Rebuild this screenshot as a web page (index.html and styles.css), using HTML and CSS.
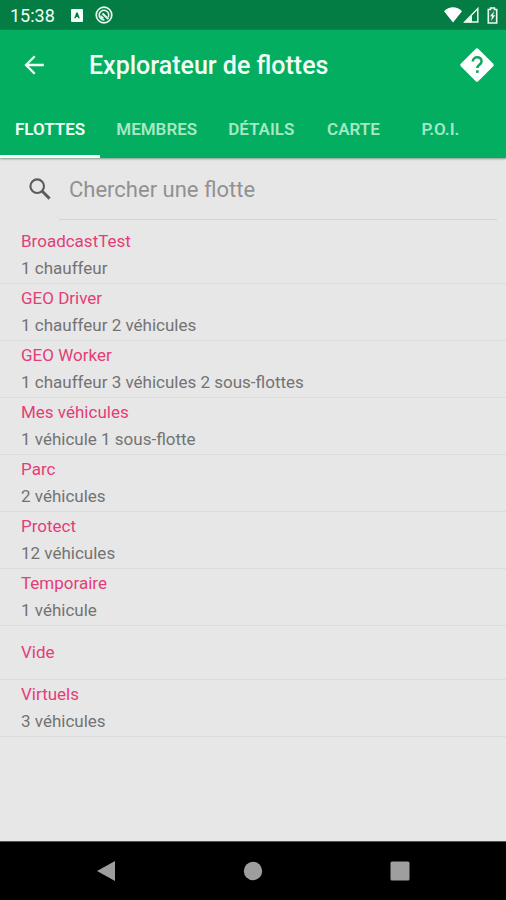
FILE: index.html
```html
<!DOCTYPE html>
<html lang="fr">
<head>
<meta charset="utf-8">
<meta name="viewport" content="width=device-width, initial-scale=1">
<title>Explorateur de flottes</title>
<link rel="stylesheet" href="styles.css">
</head>
<body>
<div class="status">
  <time class="clock">15:38</time>
  <svg class="notif" width="12" height="13" viewBox="0 0 12 13" aria-hidden="true"><rect width="12" height="13" rx="1" fill="#f4fff8"/><path d="M3.2 9.3 5.3 3.4h1.4l2.1 5.9H7.2l-.4-1.2H5.1l-.4 1.2z" fill="#047a40"/></svg>
  <svg width="18" height="18" viewBox="0 0 18 18" fill="none" stroke="#e9fbf0" aria-hidden="true"><circle cx="9" cy="9" r="7.8" stroke-width="1.7"/><path d="M13.2 11.3A4.8 4.8 0 1 0 9.5 13.8" stroke-width="1.6"/><path d="m7.5 7.5 5.8 5.6M6 9.6c.2 1.5 1 2.3 2.5 2.6" stroke-width="2"/></svg>
  <div class="signals">
    <svg width="18" height="16" viewBox="0 0 18 16" fill="#fff" aria-hidden="true"><path d="M0 4.3C5-1 13-1 18 4.3L9 15.5z"/></svg>
    <svg width="16" height="16" viewBox="0 0 16 16" aria-hidden="true"><path d="M1.8 15 14.8 1.6V15z" fill="none" stroke="#e9fbf0" stroke-width="1.5"/><path d="M1 15.5 9 7.5v8z" fill="#e9fbf0"/></svg>
    <svg class="battery" width="11" height="17" viewBox="0 0 11 17" aria-hidden="true"><path d="M3.5 1h4v1.5h2.2V16H1.3V2.5h2.2z" fill="#167d4c" stroke="#e9fbf0" stroke-width="1.6"/><path d="M7.2 4 3 9.3h2L4 14l4.2-5.8H6z" fill="#e9fbf0"/></svg>
  </div>
</div>
<header class="header">
  <div class="appbar">
    <button class="icon-button" type="button" aria-label="Retour"><svg width="20" height="20" viewBox="0 0 20 20" fill="none" stroke="#effff5" stroke-width="2.3"><path d="M19.8 10H2M10.7 1.2 2 10l8.7 8.8"/></svg></button>
    <h1 class="title">Explorateur de flottes</h1>
    <button class="icon-button" type="button" aria-label="Aide"><svg width="36" height="36" viewBox="0 0 36 36"><path d="M18 3 33 18 18 33 3 18z" fill="#fff" stroke="#fff" stroke-width="3.5" stroke-linejoin="round"/><path d="M13.8 14.5c0-5.6 8.8-5.6 8.8-.2 0 3.4-4.3 3.5-4.3 6.7" fill="none" stroke="#12a65c" stroke-width="2.5"/><path d="M17 23.3h2.6v2.6H17z" fill="#12a65c"/></svg></button>
  </div>
  <nav class="tabs">
    <a class="tab active" href="#flottes" aria-current="page">FLOTTES</a>
    <a class="tab" href="#membres">MEMBRES</a>
    <a class="tab" href="#details">DÉTAILS</a>
    <a class="tab" href="#carte">CARTE</a>
    <a class="tab" href="#poi">P.O.I.</a>
  </nav>
</header>
<main class="content">
  <div class="search">
    <label class="search-icon" for="q" aria-label="Chercher une flotte"><svg width="22" height="22" viewBox="0 0 22 22" fill="none" stroke="#5c5c5c"><circle cx="8.2" cy="8.2" r="6.8" stroke-width="2.1"/><path d="m13 13 7.6 7.6" stroke-width="2.9"/></svg></label>
    <input class="search-input" id="q" type="text" placeholder="Chercher une flotte">
  </div>
  <ul class="list">
    <li class="row"><span class="name">BroadcastTest</span><span class="info">1 chauffeur</span></li>
    <li class="row"><span class="name">GEO Driver</span><span class="info">1 chauffeur 2 véhicules</span></li>
    <li class="row"><span class="name">GEO Worker</span><span class="info">1 chauffeur 3 véhicules 2 sous-flottes</span></li>
    <li class="row"><span class="name">Mes véhicules</span><span class="info">1 véhicule 1 sous-flotte</span></li>
    <li class="row"><span class="name">Parc</span><span class="info">2 véhicules</span></li>
    <li class="row"><span class="name">Protect</span><span class="info">12 véhicules</span></li>
    <li class="row"><span class="name">Temporaire</span><span class="info">1 véhicule</span></li>
    <li class="row"><span class="name">Vide</span></li>
    <li class="row"><span class="name">Virtuels</span><span class="info">3 véhicules</span></li>
  </ul>
</main>
<nav class="system">
  <button class="system-button" type="button" aria-label="Précédent"><svg width="20" height="22" viewBox="0 0 20 22"><path d="M1 11 19 1v20z" fill="#9e9e9e"/></svg></button>
  <button class="system-button" type="button" aria-label="Accueil"><svg width="20" height="20" viewBox="0 0 20 20"><circle cx="10" cy="10" r="9.2" fill="#9e9e9e"/></svg></button>
  <button class="system-button" type="button" aria-label="Applications récentes"><svg width="20" height="20" viewBox="0 0 20 20"><rect x=".5" y=".5" width="19" height="19" rx="1.5" fill="#9e9e9e"/></svg></button>
</nav>
</body>
</html>
```
FILE: styles.css
```css
* {
  box-sizing: border-box;
}

body {
  margin: 0;
  min-height: 100vh;
  display: flex;
  flex-direction: column;
  background: #e7e7e7;
  font-family: Roboto, "Liberation Sans", sans-serif;
}

svg {
  display: block;
}

button {
  padding: 0;
  border: 0;
  background: none;
}

.status {
  display: flex;
  align-items: center;
  height: 30px;
  padding: 0 8px 0 10px;
  background: #047d45;
  color: #effff5;
}

.clock {
  padding-top: 2px;
  font-size: 18px;
  line-height: 20px;
}

.notif {
  margin: 0 12px 0 16px;
}

.signals {
  display: flex;
  align-items: center;
  gap: 1px;
  margin-left: auto;
}

.battery {
  margin-left: 7px;
}

.header {
  background: #03ae60;
  box-shadow: 0 1px 2px #7d9c8b;
}

.appbar {
  display: flex;
  align-items: center;
  height: 70px;
  padding: 0 11px 0 24px;
}

.title {
  flex: 1;
  margin: 0 0 0 45px;
  padding-top: 2px;
  color: #f2fff7;
  font-size: 25px;
  font-weight: 500;
  line-height: 32px;
}

.tabs {
  display: flex;
  gap: 1px;
  height: 58px;
}

.tab {
  min-width: 86px;
  padding: 0 15px;
  border-bottom: 3px solid transparent;
  color: #a6e8c3;
  font-size: 17px;
  font-weight: 600;
  line-height: 58px;
  text-align: center;
  text-decoration: none;
}

.tab.active {
  border-bottom-color: #f4fff8;
  color: #f4fff8;
}

.content {
  flex: 1;
}

.search {
  display: flex;
  align-items: center;
  padding: 0 9px 0 29px;
}

.search-icon {
  margin-right: 8px;
}

.search-input {
  flex: 1;
  min-width: 0;
  height: 62px;
  padding: 2px 10px 0;
  border: 0;
  border-bottom: 1px solid #d3d3d3;
  border-radius: 0;
  outline: 0;
  background: none;
  color: #666;
  font: 22px Roboto, "Liberation Sans", sans-serif;
}

.search-input::placeholder {
  color: #919191;
  opacity: 1;
}

.list {
  margin: 0;
  padding: 7px 0 0;
  list-style: none;
}

.row {
  display: flex;
  flex-direction: column;
  justify-content: center;
  min-height: 54px;
  padding: 1px 21px;
  border-bottom: 1px solid #dcdcdc;
  font-size: 17px;
  line-height: 27px;
}

.name {
  color: #e43d77;
}

.info {
  color: #737373;
}

.system {
  display: flex;
  justify-content: space-between;
  align-items: center;
  height: 59px;
  padding: 0 96px;
  border-top: 1px solid #555;
  background: #000;
}
```
